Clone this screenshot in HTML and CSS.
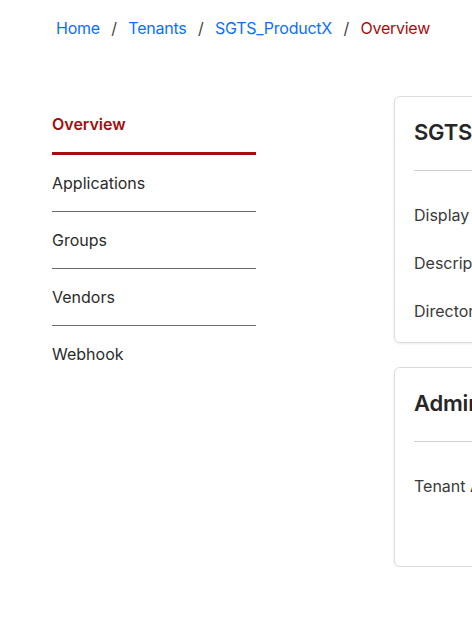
FILE: index.html
```html
<!DOCTYPE html>
<html lang="en">
<head>
<meta charset="utf-8">
<title>Overview</title>
<link rel="stylesheet" href="styles.css">
</head>
<body>
<nav class="breadcrumb">
  <a href="#" class="crumb">Home</a><span class="sep">/</span>
  <a href="#" class="crumb">Tenants</a><span class="sep">/</span>
  <a href="#" class="crumb">SGTS_ProductX</a><span class="sep">/</span>
  <span class="crumb current">Overview</span>
</nav>
<div class="layout">
  <aside class="sidenav">
    <a href="#" class="nav-item active">Overview</a>
    <a href="#" class="nav-item">Applications</a>
    <a href="#" class="nav-item">Groups</a>
    <a href="#" class="nav-item">Vendors</a>
    <a href="#" class="nav-item last">Webhook</a>
  </aside>
  <main class="content">
    <section class="card">
      <h2 class="card-title">SGTS_ProductX</h2>
      <hr class="divider">
      <div class="rows">
        <div class="row"><span class="label">Display Name</span><span class="value">SGTS_ProductX</span></div>
        <div class="row"><span class="label">Description</span><span class="value">-</span></div>
        <div class="row"><span class="label">Directory</span><span class="value">-</span></div>
      </div>
    </section>
    <section class="card card-admin">
      <h2 class="card-title">Administrators</h2>
      <hr class="divider">
      <div class="rows">
        <div class="row"><span class="label">Tenant Admins</span><span class="value"></span></div>
      </div>
    </section>
  </main>
</div>
</body>
</html>
```
FILE: styles.css
```css
html, body {
  overflow: hidden;
}
body {
  margin: 0;
  font-family: Inter, "Noto Sans", "Liberation Sans", sans-serif;
  font-size: 16px;
  line-height: 24px;
  color: #333;
  background: #fff;
  width: 900px;
}
.breadcrumb {
  display: flex;
  align-items: center;
  gap: 11.5px;
  padding: 16px 0 0 56px;
  height: 24px;
  letter-spacing: -0.25px;
}
.crumb {
  color: #0d6efd;
  text-decoration: none;
}
.crumb.current {
  color: #a11010;
}
.sep {
  color: #444;
}
.layout {
  display: flex;
  margin-top: 56px;
  padding-left: 52px;
}
.sidenav {
  width: 204px;
  display: flex;
  flex-direction: column;
  padding-top: 16px;
  flex: none;
}
.nav-item {
  color: #2b2b2b;
  text-decoration: none;
  padding: 16px 0;
  border-bottom: 1px solid #6b6b6b;
}
.nav-item.active {
  color: #a11010;
  font-weight: 600;
  padding-top: 0;
  padding-bottom: 16px;
  border-bottom: 3px solid #a11010;
}
.nav-item.last {
  border-bottom: none;
}
.content {
  margin-left: 138px;
  display: flex;
  flex-direction: column;
  gap: 24px;
  width: 600px;
}
.card {
  border: 1px solid #dcdcdc;
  border-radius: 6px;
  box-shadow: 0 1px 3px rgba(0,0,0,0.08);
  padding: 19px 19px 7px;
}
.card-title {
  margin: 0;
  font-size: 22px;
  line-height: 32px;
  font-weight: 600;
  color: #262626;
  letter-spacing: -0.2px;
}
.divider {
  border: none;
  border-top: 1px solid #d0d0d0;
  margin: 22px 0 0;
}
.rows {
  display: flex;
  flex-direction: column;
  padding-top: 20px;
}
.row {
  display: flex;
  padding: 12px 0;
  color: #3a3a3a;
}
.label {
  width: 200px;
  flex: none;
}
.card-admin .rows {
  padding-bottom: 49px;
}
```
